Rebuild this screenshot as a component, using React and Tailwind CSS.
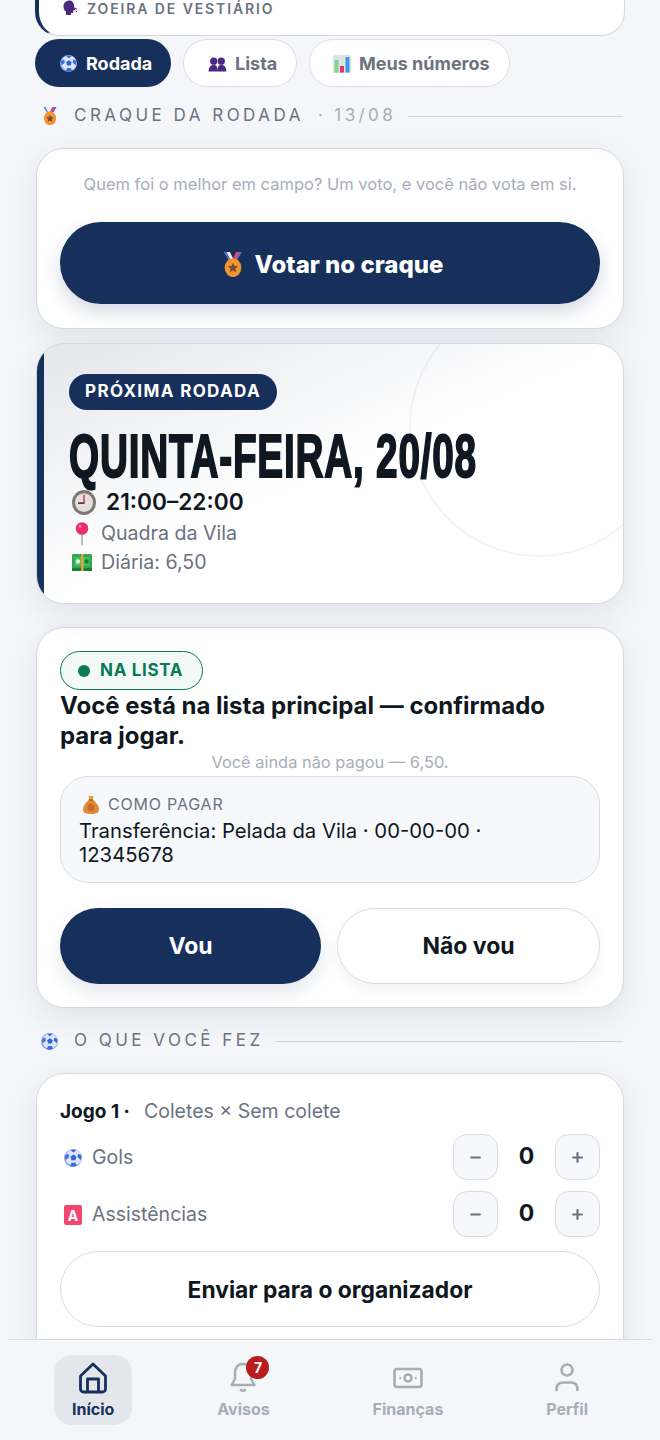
import React from "react";
import { Minus, Plus } from "lucide-react";

const Ball = ({ size = 18 }) => (
  <svg width={size} height={size} viewBox="0 0 20 20" className="shrink-0">
    <circle cx="10" cy="10" r="10" fill="#8f9fe2" />
    <circle cx="10.500" cy="9.500" r="9" fill="#dfe4f8" />
    <path d="M10.500 6.200l3.300 2.400-1.200 3.800H8.400L7.200 8.600z" fill="#2a66d6" />
    <path d="M7 1.200c2.200-.8 4.800-.8 7 0l-3.500 2.600zM1.600 6.800L5 5.400l.7 3.400-3.600 3.400c-.8-1.800-1-3.700-.5-5.400zM19 6.800l-3.400-1.400-.7 3.400 3.600 3.400c.8-1.800 1-3.700.5-5.400zM6.800 18.800l1.500-3.600h4.400l1.500 3.400c-2.200 1-5.200 1.200-7.400.2z" fill="#3470dc" />
  </svg>
);

const Busts = ({ size = 20 }) => (
  <svg width={size} height={size} viewBox="0 0 20 20" className="shrink-0">
    <g fill="#4a2a80">
      <circle cx="6" cy="7.500" r="3.800" />
      <circle cx="14" cy="7.500" r="3.800" />
      <path d="M.6 18.500c0-4.500 2-7 5.400-7s4 2.500 4 7zM10 18.500c0-4.500.6-7 4-7s5.400 2.500 5.400 7z" />
    </g>
  </svg>
);

const BarsChart = ({ size = 18 }) => (
  <svg width={size} height={size} viewBox="1 1 18 18" className="shrink-0">
    <rect x="1" y="1" width="18" height="18" rx="1" fill="#dfe2e6" />
    <rect x="2.500" y="6" width="4" height="12.500" fill="#86d488" />
    <rect x="8" y="12" width="4" height="6.500" fill="#e8336f" />
    <rect x="13.500" y="3" width="4" height="15.500" fill="#3c9be0" />
  </svg>
);

const Medal = ({ size = 18 }) => (
  <svg width={size} height={size * 1.14} viewBox="0 0 21 24" className="shrink-0">
    <path d="M2 0h5.500l4.500 9H7.500z" fill="#eef1f8" />
    <path d="M19 0h-5.500L9 9h4.500z" fill="#e8476f" />
    <path d="M2 0h2.500l4.500 9H7.500zM19 0h-2.500L12 9h1.500z" fill="#4f6fd0" />
    <ellipse cx="10.500" cy="15" rx="8" ry="9" fill="#f0962f" />
    <path d="M10.500 10.300l1.500 3 3.300.4-2.400 2.300.6 3.300-3-1.600-3 1.600.6-3.300-2.400-2.300 3.300-.4z" fill="#7a4a35" />
  </svg>
);

const Clock = () => (
  <svg width="24" height="25" viewBox="0 0 24 24" preserveAspectRatio="none" className="shrink-0">
    <circle cx="12" cy="12" r="12" fill="#7d7773" />
    <circle cx="12" cy="12" r="9" fill="#e3dfdd" />
    <path d="M12 12.500V4.500" stroke="#d63c4f" strokeWidth="1.500" />
    <path d="M12.500 12.500H6" stroke="#454545" strokeWidth="1.700" />
  </svg>
);

const Pin = () => (
  <svg width="20" height="24" viewBox="0 0 20 24" className="shrink-0">
    <path d="M10 10v13.500" stroke="#a7adb8" strokeWidth="1.500" />
    <circle cx="10" cy="6.500" r="6.300" fill="#ea2e6d" />
    <circle cx="8" cy="4.500" r="1.400" fill="#f78fb1" />
  </svg>
);

const Cash = () => (
  <svg width="20" height="17" viewBox="0 0 20 17" className="shrink-0">
    <rect y="0" width="20" height="17" rx="1" fill="#2fa84f" />
    <rect y="14" width="20" height="3" fill="#1c7c38" />
    <rect x="2.500" y="3" width="15" height="9" fill="#45bf65" />
    <circle cx="6" cy="7.500" r="2.200" fill="#d4f2dc" />
    <circle cx="14.500" cy="7.500" r="2.200" fill="#1c7c38" />
    <rect x="9" width="2.500" height="17" fill="#e8a33d" />
  </svg>
);

const Bag = () => (
  <svg width="16" height="19" viewBox="0 0 16 19" className="shrink-0">
    <path d="M5.500 1h5L9.800 5H6.200z" fill="#e8a33d" />
    <path d="M6 5h4c3 2 6 6 6 9.500 0 3-2.500 4.500-8 4.500s-8-1.500-8-4.500C0 11 3 7 6 5z" fill="#e08a35" />
    <rect x="5.800" y="4.300" width="4.400" height="1.300" fill="#9a5a28" />
    <circle cx="8" cy="12.500" r="3.500" fill="#c96a2a" />
  </svg>
);

const Head = () => (
  <svg width="15" height="16" viewBox="0 0 15 16" className="shrink-0">
    <path d="M6.500.500C3 .5.500 3 .500 6.500c0 2.500 1 4 2.500 5v3.500h5v-2h2l.6-3 1.800.2L11 6C11 3 9.500.5 6.500.5z" fill="#4a2a80" />
    <path d="M12 8.500l2 .5M12.500 11l1.500 1" stroke="#4a2a80" strokeWidth="1" />
  </svg>
);

const SectionTitle = ({ icon, title, extra }) => (
  <div className="flex items-center h-6">
    <div className="w-[17px] ml-[6px] flex justify-center">{icon}</div>
    <span className="ml-[16px] text-[17px] tracking-[0.205em] text-[#6b7280] whitespace-nowrap">{title}</span>
    {extra && <span className="ml-[14px] text-[17px] tracking-[0.2em] text-[#a7adb8] whitespace-nowrap">{extra}</span>}
    <div className="flex-1 h-px bg-[#cdd2d9] ml-[12px] mr-[2px]" />
  </div>
);

const Card = ({ className = "", children }) => (
  <div className={`rounded-[28px] border border-[#d5d8de] bg-white shadow-[0_10px_30px_rgba(23,47,91,0.09)] ${className}`}>
    {children}
  </div>
);

const Stepper = () => (
  <div className="flex items-center">
    <button className="w-[45px] h-[46px] rounded-[14px] border-[1.5px] border-[#d8dce2] bg-[#f6f8fb] flex items-center justify-center text-[#6b7280]">
      <Minus size={15} strokeWidth={3.500} />
    </button>
    <span className="w-[57px] text-center text-[23px] font-bold text-[#0f1720] -mt-[2px]">0</span>
    <button className="w-[45px] h-[46px] rounded-[14px] border-[1.5px] border-[#d8dce2] bg-[#f6f8fb] flex items-center justify-center text-[#6b7280]">
      <Plus size={15} strokeWidth={3.500} />
    </button>
  </div>
);

const NavItem = ({ label, active, children }) => (
  <div className={`flex flex-col items-center h-[70px] px-[18px] pt-[5px] rounded-[18px] ${active ? "bg-[#e3e7ec] text-[#172f5b]" : "text-[#a7adb8]"}`}>
    <div className="relative h-[36px] flex items-center justify-center">{children}</div>
    <span className="mt-[2px] text-[16px] font-bold leading-[22px]">{label}</span>
  </div>
);

export default function App() {
  return (
    <div className="relative h-[1440px] overflow-hidden flex flex-col bg-[#f4f6f9] font-['Inter','Noto_Sans',sans-serif]">
      <main className="flex-1 overflow-hidden px-[35px]">
        {/* Card cut off by the scroll position */}
        <div className="h-[36px] rounded-b-[24px] border-b border-r border-[#d5d8de] border-l-[4px] border-l-[#172f5b] bg-white pl-[24px] flex items-start">
          <div className="flex items-center gap-[9px] h-[16px]">
            <Head />
            <span className="text-[14px] font-semibold tracking-[0.135em] text-[#6b7280]">ZOEIRA DE VESTIÁRIO</span>
          </div>
        </div>

        <div className="flex gap-3 mt-[3px]">
          <button className="h-[48px] w-[136px] pl-[25px] pt-px rounded-full bg-[#172f5b] text-white flex items-center gap-[9px] text-[18px] font-bold">
            <Ball size={17} /> Rodada
          </button>
          <button className="h-[48px] w-[114px] pl-[24px] pt-px rounded-full bg-white border border-[#dcdfe5] text-[#6b7280] flex items-center gap-[8px] text-[18px] font-bold">
            <Busts size={19} /> Lista
          </button>
          <button className="h-[48px] w-[201px] pl-[23px] pt-px rounded-full bg-white border border-[#dcdfe5] text-[#6b7280] flex items-center gap-[8px] text-[18px] font-bold">
            <BarsChart size={18} /> Meus números
          </button>
        </div>

        <div className="mt-[17px]">
          <SectionTitle icon={<Medal size={16} />} title="CRAQUE DA RODADA" extra="· 13/08" />
        </div>

        <Card className="mt-[20px] mx-px h-[181px] px-[23px] pt-[24px]">
          <p className="text-center text-[16.500px] leading-[22px] text-[#a7adb8] whitespace-nowrap">
            Quem foi o melhor em campo? Um voto, e você não vota em si.
          </p>
          <button className="mt-[27px] w-full h-[82px] pl-[5px] pt-[3px] rounded-full bg-[#172f5b] text-white flex items-center justify-center gap-[11px] text-[24px] font-extrabold shadow-[0_8px_18px_rgba(23,47,91,0.18)]">
            <Medal size={22} /> Votar no craque
          </button>
        </Card>

        <Card className="relative overflow-hidden mt-[14px] mx-px h-[261px] pl-[32px] pt-[30px] border-[#c9ced6] bg-gradient-to-br from-[#e3e6eb] via-white via-50% to-white">
          <div className="absolute left-0 top-0 bottom-0 w-[7px] bg-[#172f5b]" />
          <div className="absolute -top-[47px] -right-[46px] w-[260px] h-[260px] rounded-full border-2 border-[#172f5b]/5" />
          <span className="inline-flex items-center h-[36px] px-[16px] rounded-full bg-[#172f5b] text-white text-[17px] font-bold tracking-[0.08em]">PRÓXIMA RODADA</span>
          <h2 className="mt-[16px] h-[60px] text-[61px] leading-[60px] font-bold text-[#0f1720] whitespace-nowrap font-['Liberation_Sans',sans-serif]">
            <span className="inline-block origin-left scale-x-[0.635] tracking-[0.02em] [-webkit-text-stroke:2px_#0f1720]">QUINTA-FEIRA, 20/08</span>
          </h2>
          <div className="flex items-center gap-[10px] ml-[3px] mt-px h-[30px] text-[22.700px] font-semibold text-[#0f1720]">
            <Clock /> 21:00–22:00
          </div>
          <div className="flex items-center gap-[9px] ml-[3px] mt-[2px] h-[29px] text-[19.600px] text-[#6b7280]">
            <Pin /> Quadra da Vila
          </div>
          <div className="flex items-center gap-[9px] ml-[3px] h-[29px] text-[19.600px] text-[#6b7280]">
            <Cash /> Diária: 6,50
          </div>
        </Card>

        <Card className="mt-[23px] mx-px h-[381px] px-[23px] pt-[23px]">
          <span className="inline-flex items-center gap-[10px] h-[39px] w-[143px] pl-[17px] rounded-full border-[1.5px] border-[#0a7a55] bg-[#f2f9f6] text-[#0a7a55] text-[17px] font-bold tracking-[0.04em]">
            <i className="w-[12px] h-[12px] rounded-full bg-[#0a7a55]" /> NA LISTA
          </span>
          <h3 className="text-[24px] leading-[30px] font-bold text-[#0f1720] mt-px">
            Você está na lista principal — confirmado para jogar.
          </h3>
          <p className="text-center text-[16.400px] leading-[20px] text-[#a7adb8] mt-px">Você ainda não pagou — 6,50.</p>
          <div className="mt-[4px] h-[107px] rounded-[28px] border border-[#d8dce2] bg-[#f6f8fb] pl-[18px] pr-[24px] pt-[15px]">
            <div className="flex items-center gap-[9px] ml-[4px] h-[24px] text-[16px] tracking-[0.05em] text-[#6b7280]">
              <Bag /> COMO PAGAR
            </div>
            <p className="mt-[3px] text-[20.300px] leading-[24px] text-[#0f1720]">Transferência: Pelada da Vila · 00-00-00 · 12345678</p>
          </div>
          <div className="flex gap-4 mt-[25px]">
            <button className="h-[76px] w-[261px] rounded-full bg-[#172f5b] text-white text-[23px] font-bold shadow-[0_8px_18px_rgba(23,47,91,0.12)]">Vou</button>
            <button className="h-[76px] flex-1 rounded-full bg-white border border-[#d8dce2] text-[#0f1720] text-[23px] font-bold shadow-[0_6px_14px_rgba(23,47,91,0.06)]">Não vou</button>
          </div>
        </Card>

        <div className="mt-[21px]">
          <SectionTitle icon={<Ball size={17} />} title="O QUE VOCÊ FEZ" />
        </div>

        <Card className="mt-[20px] mx-px h-[400px] px-[23px] pt-[23px]">
          <div className="flex items-center h-[28px] pt-[2px]">
            <span className="text-[19px] font-bold text-[#0f1720]">Jogo 1 ·</span>
            <span className="ml-[14px] text-[19.500px] text-[#6b7280]">Coletes × Sem colete</span>
          </div>
          <div className="flex items-center justify-between mt-[9px]">
            <div className="flex items-center gap-[10px] ml-[4px] pt-[2px] text-[19.500px] text-[#6b7280]"><Ball size={18} /> Gols</div>
            <Stepper />
          </div>
          <div className="flex items-center justify-between mt-[11px]">
            <div className="flex items-center gap-[10px] ml-[4px] pt-[2px] text-[19.500px] text-[#6b7280]">
              <span className="w-[18px] h-[20px] rounded-[2px] bg-[#f2456f] flex items-center justify-center text-white text-[14px] font-bold">A</span>
              Assistências
            </div>
            <Stepper />
          </div>
          <button className="mt-[14px] w-full h-[76px] pt-[2px] rounded-full bg-white border border-[#d8dce2] text-[#0f1720] text-[22.800px] font-bold">Enviar para o organizador</button>
        </Card>
      </main>

      <nav className="mx-[8px] h-[101px] shrink-0 border-t border-[#d8dce2] px-[46px] pt-[15px] flex justify-between items-start bg-[#f4f6f9]">
        <NavItem label="Início" active>
          <svg width="30" height="32" viewBox="0 0 30 32" fill="none" stroke="currentColor" strokeWidth="2.800" strokeLinejoin="round">
            <path d="M2.500 14L15 2l12.500 12v13a3 3 0 0 1-3 3h-19a3 3 0 0 1-3-3z" />
            <path d="M9.500 30V17h11v13" />
          </svg>
        </NavItem>
        <NavItem label="Avisos">
          <svg width="30" height="34" viewBox="0 0 30 34" fill="none" stroke="currentColor" strokeWidth="2.400" strokeLinejoin="round">
            <path d="M15 3c-5.500 0-8 4-8 9v6l-3.500 6h23L23 18v-6c0-5-2.500-9-8-9z" />
            <path d="M12.500 28c.8 2.400 4.200 2.400 5 0" />
          </svg>
          <span className="absolute -top-[4px] -right-[11px] w-[23px] h-[23px] rounded-full bg-[#b91c1c] text-white text-[14px] font-bold flex items-center justify-center">7</span>
        </NavItem>
        <NavItem label="Finanças">
          <svg width="30" height="24" viewBox="0 0 30 24" fill="none" stroke="currentColor" strokeWidth="2.600" strokeLinejoin="round">
            <rect x="1.500" y="3" width="27" height="18" rx="2.500" />
            <circle cx="15" cy="12" r="3.500" />
            <path d="M6.500 12h1.500M22 12h1.500" />
          </svg>
        </NavItem>
        <NavItem label="Perfil">
          <svg width="28" height="32" viewBox="0 0 28 32" fill="none" stroke="currentColor" strokeWidth="2.600">
            <circle cx="14" cy="8" r="5.500" />
            <path d="M3.500 29v-1.500c0-4.500 2.500-7 7-7h7c4.500 0 7 2.500 7 7V29" />
          </svg>
        </NavItem>
      </nav>
    </div>
  );
}
